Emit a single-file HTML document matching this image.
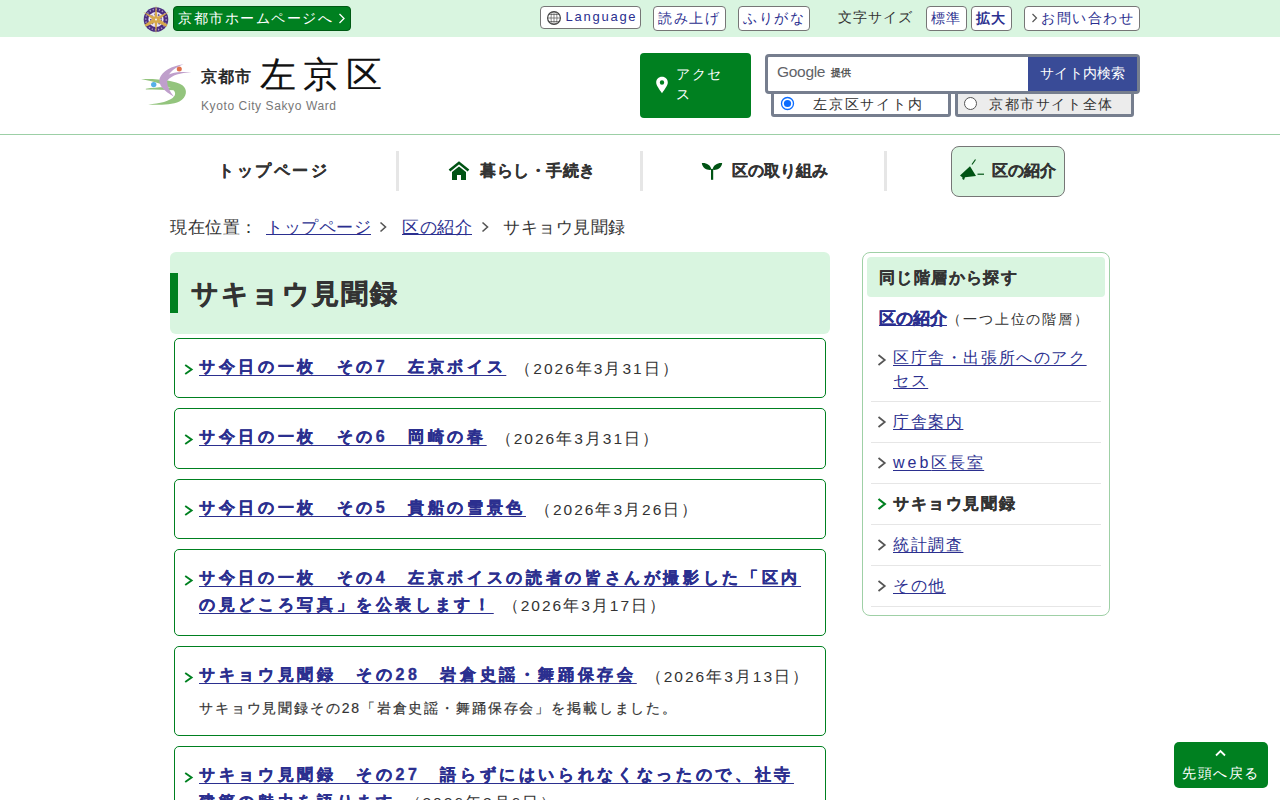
<!DOCTYPE html>
<html lang="ja">
<head>
<meta charset="utf-8">
<style>
*{box-sizing:border-box;margin:0;padding:0}
html,body{width:1280px;height:800px;overflow:hidden;background:#fff}
body{font-family:"Liberation Sans",sans-serif;color:#333;position:relative}
.a{position:absolute;white-space:nowrap}
a{color:#2b2f8f;text-decoration:underline}
.tbtn{position:absolute;background:#fff;border:1px solid #767676;border-radius:4px}
.tt{position:absolute;white-space:nowrap;color:#2b2f8f;font-size:14px;letter-spacing:1px;line-height:16px}
.nav{position:absolute;top:162px;font-size:16px;font-weight:bold;color:#333;line-height:18px;white-space:nowrap;-webkit-text-stroke:0.2px #333}
.ndiv{position:absolute;top:151px;width:3px;height:40px;background:#e6e6e6}
.item{position:absolute;left:174px;width:652px;border:1px solid #008020;border-radius:5px;background:#fff}
.t{position:absolute;left:24px;font-size:16px;font-weight:bold;letter-spacing:3.65px;line-height:26.5px;white-space:normal}
.t a{color:#2b2f8f;text-underline-offset:2.5px;text-decoration-thickness:1.2px;-webkit-text-stroke:0.35px #2b2f8f}
.date{font-weight:normal;color:#333;font-size:15.5px;letter-spacing:2px;margin-left:9px;position:relative;top:1.5px;white-space:nowrap}
.arr{position:absolute;left:9px;width:10px;height:11px;background:no-repeat}
.side{position:absolute;left:871px;width:230px;border-bottom:1px solid #e6e6e6}
.side .st{position:absolute;left:22px;font-size:16px;letter-spacing:1.6px;line-height:24px;white-space:normal;width:205px}
.side a{text-underline-offset:2px}
.sarr{position:absolute;left:5.5px;width:10px;height:12px}
</style>
</head>
<body>
<!-- top bar -->
<div class="a" style="left:0;top:0;width:1280px;height:37px;background:#d9f5e0"></div>
<svg class="a" style="left:142px;top:4px" width="28" height="31" viewBox="0 0 28 31">
<circle cx="14" cy="15.5" r="12.3" fill="#4b2d7f"/>
<circle cx="14" cy="15.5" r="10.3" fill="none" stroke="#a595c4" stroke-width="1.6" stroke-dasharray="1.3 1.9"/>
<circle cx="14" cy="15.5" r="7.6" fill="#ebe6f2"/>
<circle cx="14" cy="15.5" r="5.2" fill="none" stroke="#5d4290" stroke-width="1.6" stroke-dasharray="1.6 2.1"/>
<g fill="#d6a94c" transform="translate(14,15.5)">
<path d="M0,-14.5 L1.7,0 L0,14.5 L-1.7,0 Z"/>
<path d="M-1.9,0 L0,-14.8 L1.9,0 Z" transform="rotate(-60)"/>
<path d="M-1.9,0 L0,-14.8 L1.9,0 Z" transform="rotate(60)"/>
<path d="M-2.2,0 L-1.2,-12.5 L1.2,-12.5 L2.2,0 Z" transform="rotate(-120)"/>
<path d="M-2.2,0 L-1.2,-12.5 L1.2,-12.5 L2.2,0 Z" transform="rotate(120)"/>
</g>
<circle cx="14" cy="15.5" r="0.9" fill="#fff"/>
</svg>
<div class="a" style="left:173px;top:6px;width:178px;height:25px;background:#008020;border:1px solid #005a14;border-radius:4px"></div>
<div class="a" style="left:178px;top:10px;color:#fff;font-size:14px;letter-spacing:1.55px;line-height:16px">京都市ホームページへ</div>
<svg class="a" style="left:338px;top:13px" width="8" height="11" viewBox="0 0 8 11"><path d="M1.5 1 L6 5.5 L1.5 10" fill="none" stroke="#fff" stroke-width="1.3"/></svg>

<div class="tbtn" style="left:540px;top:6px;width:101px;height:23px"></div>
<svg class="a" style="left:546px;top:10px" width="16" height="16" viewBox="0 0 16 16"><g fill="none" stroke="#555" stroke-width="0.7"><circle cx="8" cy="8" r="6.4" stroke-width="1.2" stroke="#444"/><ellipse cx="8" cy="8" rx="3" ry="6.5"/><line x1="1.5" y1="8" x2="14.5" y2="8"/><line x1="2.5" y1="4.5" x2="13.5" y2="4.5"/><line x1="2.5" y1="11.5" x2="13.5" y2="11.5"/><line x1="8" y1="1.5" x2="8" y2="14.5"/></g></svg>
<div class="tt" style="left:565.5px;top:9px;font-size:13px;letter-spacing:1.75px">Language</div>
<div class="tbtn" style="left:653px;top:6px;width:73px;height:25px"></div>
<div class="tt" style="left:658px;top:10px;letter-spacing:1.5px">読み上げ</div>
<div class="tbtn" style="left:738px;top:6px;width:72px;height:25px"></div>
<div class="tt" style="left:743px;top:10px;letter-spacing:1.7px">ふりがな</div>
<div class="tt" style="left:838px;top:9px;color:#333">文字サイズ</div>
<div class="tbtn" style="left:926px;top:6px;width:41px;height:25px"></div>
<div class="tt" style="left:931px;top:10px">標準</div>
<div class="tbtn" style="left:971px;top:6px;width:41px;height:25px"></div>
<div class="tt" style="left:976px;top:10px;font-weight:bold">拡大</div>
<div class="tbtn" style="left:1024px;top:6px;width:116px;height:25px"></div>
<svg class="a" style="left:1031px;top:13px" width="7" height="10" viewBox="0 0 7 10"><path d="M1.5 1 L5.5 5 L1.5 9" fill="none" stroke="#555" stroke-width="1.2"/></svg>
<div class="tt" style="left:1041px;top:10px;letter-spacing:1.6px">お問い合わせ</div>

<!-- logo -->
<svg class="a" style="left:138px;top:60px" width="56" height="48" viewBox="0 0 933 800">
<g fill="#93c47d">
<path d="M50,318 C300,305 620,340 740,420 C830,490 820,620 690,690 C560,750 330,752 170,745 C360,725 540,690 600,610 C650,545 600,480 490,440 C380,395 200,345 50,318 Z"/>
<path d="M130,480 C300,455 480,445 610,470 L615,505 C450,495 300,495 130,490 Z"/>
</g>
<g fill="#bf9fcb">
<path d="M760,72 C560,100 400,190 360,310 C330,420 440,520 600,612 C530,530 490,450 485,360 C480,250 560,150 760,72 Z"/>
<path d="M440,300 C500,220 640,190 890,205 C700,215 570,250 490,340 Z"/>
</g>
<circle cx="688" cy="150" r="42" fill="#e0704a"/>
<circle cx="262" cy="410" r="45" fill="#55b0e8"/>
</svg>
<div class="a" style="left:201px;top:67.5px;font-size:16px;color:#222;letter-spacing:0.8px;line-height:18px;-webkit-text-stroke:0.6px #222">京都市</div>
<div class="a" style="left:260px;top:55px;font-size:36px;color:#111;letter-spacing:7px;line-height:40px;-webkit-text-stroke:0.1px #111">左京区</div>
<div class="a" style="left:201px;top:98px;font-size:12px;color:#777;letter-spacing:0.6px;line-height:16px">Kyoto City Sakyo Ward</div>

<!-- access -->
<div class="a" style="left:640px;top:53px;width:111px;height:65px;background:#008020;border-radius:4px"></div>
<svg class="a" style="left:655px;top:76px" width="14" height="18" viewBox="0 0 14 18"><path d="M7 0.8 C3.5 0.8 1.2 3.3 1.2 6.5 C1.2 9.5 4.5 13.5 7 17.2 C9.5 13.5 12.8 9.5 12.8 6.5 C12.8 3.3 10.5 0.8 7 0.8 Z M7 4.3 A2.2 2.2 0 1 1 7 8.7 A2.2 2.2 0 1 1 7 4.3 Z" fill="#fff" fill-rule="evenodd"/></svg>
<div class="a" style="left:676px;top:64px;color:#fff;font-size:14px;letter-spacing:1.6px;line-height:20px">アクセ<br>ス</div>

<!-- search -->
<div class="a" style="left:765px;top:54px;width:375px;height:40px;border:3px solid #767e8e;border-radius:4px;background:#fff;z-index:1"></div>
<div class="a" style="left:1028px;top:57px;width:109px;height:34px;background:#394b97;z-index:1"></div>
<div class="a" style="z-index:1;left:1040px;top:65px;color:#fff;font-size:14px;letter-spacing:0.3px;line-height:16px">サイト内検索</div>
<div class="a" style="z-index:1;left:777px;top:63px;font-size:15.5px;color:#5f6368;line-height:18px;letter-spacing:-0.3px">Google</div>
<div class="a" style="z-index:1;left:831px;top:67px;font-size:10px;color:#555;font-weight:bold;line-height:12px">提供</div>
<div class="a" style="left:771px;top:91px;width:180px;height:26px;border:3px solid #767e8e;border-radius:3px;background:#fff"></div>
<svg class="a" style="left:780px;top:96px" width="15" height="15" viewBox="0 0 15 15"><circle cx="7.5" cy="7.5" r="6" fill="#fff" stroke="#0b6cff" stroke-width="1.3"/><circle cx="7.5" cy="7.5" r="3.6" fill="#0b6cff"/></svg>
<div class="a" style="left:813px;top:96px;font-size:14px;letter-spacing:1.8px;line-height:16px">左京区サイト内</div>
<div class="a" style="left:955px;top:91px;width:179px;height:26px;border:3px solid #767e8e;border-radius:3px;background:#ececec"></div>
<svg class="a" style="left:963px;top:96px" width="15" height="15" viewBox="0 0 15 15"><circle cx="7.5" cy="7.5" r="6" fill="#fff" stroke="#555" stroke-width="1"/></svg>
<div class="a" style="left:989px;top:96px;font-size:14px;letter-spacing:1.6px;line-height:16px">京都市サイト全体</div>

<div class="a" style="left:0;top:134px;width:1280px;height:1px;background:#9ccfa6"></div>

<!-- nav -->
<div class="nav" style="left:218px;letter-spacing:2.5px">トップページ</div>
<div class="ndiv" style="left:396px"></div>
<svg class="a" style="left:448px;top:161px" width="22" height="20" viewBox="0 0 22 20"><path d="M1.5 9.5 L11 1.8 L20.5 9.5" fill="none" stroke="#005314" stroke-width="2.6"/><path d="M4 11 L11 5.5 L18 11 L18 19 L13 19 L13 14 L9 14 L9 19 L4 19 Z" fill="#005314"/></svg>
<div class="nav" style="left:480px;letter-spacing:0.5px">暮らし・手続き</div>
<div class="ndiv" style="left:640px"></div>
<svg class="a" style="left:701px;top:162px" width="22" height="18" viewBox="0 0 22 18"><path d="M0.8 1 C5 0.5 9.5 2.5 10.6 7.8 C6 8.5 1.5 6.5 0.8 1 Z M21.2 1 C17 0.5 12.5 2.5 11.4 7.8 C16 8.5 20.5 6.5 21.2 1 Z" fill="#005314"/><rect x="10" y="7" width="2.2" height="10.8" fill="#005314"/></svg>
<div class="nav" style="left:732px">区の取り組み</div>
<div class="ndiv" style="left:884px"></div>
<div class="a" style="left:951px;top:146px;width:114px;height:51px;background:#d9f5e0;border:1px solid #767676;border-radius:8px"></div>
<svg class="a" style="left:958px;top:158px" width="28" height="24" viewBox="0 0 28 24"><path d="M2 17.5 L12 8.3 L18 18 L7 19.3 L6 22 L4.3 21 L4.5 19.5 Z" fill="#005314"/><line x1="14" y1="6.5" x2="17.5" y2="1.5" stroke="#005314" stroke-width="1.2"/><line x1="19.5" y1="16.2" x2="26" y2="16.2" stroke="#005314" stroke-width="1.2"/></svg>
<div class="nav" style="left:992px">区の紹介</div>

<!-- breadcrumb -->
<div class="a" style="left:170px;top:218.5px;font-size:17px;line-height:18px;letter-spacing:0.5px">現在位置：</div>
<div class="a" style="left:266px;top:218.5px;font-size:17px;line-height:18px;letter-spacing:0.5px"><a href="#" style="text-underline-offset:1px">トップページ</a></div>
<svg class="a" style="left:379px;top:221px" width="9" height="12" viewBox="0 0 9 12"><path d="M1.5 1.5 L6.5 6 L1.5 10.5" fill="none" stroke="#555" stroke-width="1.6"/></svg>
<div class="a" style="left:402px;top:218.5px;font-size:17px;line-height:18px;letter-spacing:0.5px"><a href="#" style="text-underline-offset:1px">区の紹介</a></div>
<svg class="a" style="left:481px;top:221px" width="9" height="12" viewBox="0 0 9 12"><path d="M1.5 1.5 L6.5 6 L1.5 10.5" fill="none" stroke="#555" stroke-width="1.6"/></svg>
<div class="a" style="left:503px;top:218.5px;font-size:17px;line-height:18px;letter-spacing:0.5px">サキョウ見聞録</div>

<!-- h1 -->
<div class="a" style="left:170px;top:252px;width:660px;height:82px;background:#d9f5e0;border-radius:6px"></div>
<div class="a" style="left:170px;top:273px;width:8px;height:40px;background:#008020"></div>
<div class="a" style="left:191px;top:279px;font-size:27px;font-weight:bold;line-height:30px;letter-spacing:2.2px;color:#333;-webkit-text-stroke:0.5px #333">サキョウ見聞録</div>

<!-- items -->
<div class="item" style="top:338px;height:60px"><svg class="arr" style="top:24.8px" viewBox="0 0 10 11"><path d="M1.2 1 L7.6 5.5 L1.2 10" fill="none" stroke="#008020" stroke-width="1.9"/></svg><div class="t" style="top:15px;width:614px"><a href="#">サ今日の一枚　その7　左京ボイス</a><span class="date">（2026年3月31日）</span></div></div>
<div class="item" style="top:408px;height:61px"><svg class="arr" style="top:24.8px" viewBox="0 0 10 11"><path d="M1.2 1 L7.6 5.5 L1.2 10" fill="none" stroke="#008020" stroke-width="1.9"/></svg><div class="t" style="top:15px;width:614px"><a href="#">サ今日の一枚　その6　岡崎の春</a><span class="date">（2026年3月31日）</span></div></div>
<div class="item" style="top:479px;height:60px"><svg class="arr" style="top:24.8px" viewBox="0 0 10 11"><path d="M1.2 1 L7.6 5.5 L1.2 10" fill="none" stroke="#008020" stroke-width="1.9"/></svg><div class="t" style="top:15px;width:614px"><a href="#">サ今日の一枚　その5　貴船の雪景色</a><span class="date">（2026年3月26日）</span></div></div>
<div class="item" style="top:549px;height:87px"><svg class="arr" style="top:24.8px" viewBox="0 0 10 11"><path d="M1.2 1 L7.6 5.5 L1.2 10" fill="none" stroke="#008020" stroke-width="1.9"/></svg><div class="t" style="top:15px;width:614px"><a href="#">サ今日の一枚　その4　左京ボイスの読者の皆さんが撮影した「区内の見どころ写真」を公表します！</a><span class="date">（2026年3月17日）</span></div></div>
<div class="item" style="top:646px;height:90px"><svg class="arr" style="top:24.8px" viewBox="0 0 10 11"><path d="M1.2 1 L7.6 5.5 L1.2 10" fill="none" stroke="#008020" stroke-width="1.9"/></svg><div class="t" style="top:15px;width:614px"><a href="#">サキョウ見聞録　その28　岩倉史謡・舞踊保存会</a><span class="date">（2026年3月13日）</span></div><div class="a" style="left:24px;top:52px;font-size:14px;letter-spacing:1.85px;line-height:18px;-webkit-text-stroke:0.2px #333">サキョウ見聞録その28「岩倉史謡・舞踊保存会」を掲載しました。</div></div>
<div class="item" style="top:746px;height:90px"><svg class="arr" style="top:24.8px" viewBox="0 0 10 11"><path d="M1.2 1 L7.6 5.5 L1.2 10" fill="none" stroke="#008020" stroke-width="1.9"/></svg><div class="t" style="top:15px;width:614px"><a href="#">サキョウ見聞録　その27　語らずにはいられなくなったので、社寺建築の魅力を語ります</a><span class="date">（2026年3月6日）</span></div></div>

<!-- sidebar -->
<div class="a" style="left:862px;top:252px;width:248px;height:364px;border:1px solid #9fd0a6;border-radius:8px"></div>
<div class="a" style="left:867px;top:257px;width:238px;height:40px;background:#d9f5e0;border-radius:4px"></div>
<div class="a" style="left:879px;top:268.5px;font-size:16px;font-weight:bold;line-height:18px;letter-spacing:1.4px;-webkit-text-stroke:0.2px #333">同じ階層から探す</div>
<div class="a" style="left:879px;top:310px;font-size:17px;line-height:18px"><a href="#" style="font-weight:bold;text-underline-offset:1px;-webkit-text-stroke:0.3px #2b2f8f">区の紹介</a><span style="font-size:14px;letter-spacing:1.9px">（一つ上位の階層）</span></div>
<div class="side" style="top:344px;height:58px"><svg class="sarr" style="top:10px" viewBox="0 0 10 12"><path d="M1.5 1 L7.8 6 L1.5 11" fill="none" stroke="#555" stroke-width="1.7"/></svg><div class="st" style="top:3px;line-height:22.5px"><a href="#">区庁舎・出張所へのアクセス</a></div></div>
<div class="side" style="top:402px;height:41px"><svg class="sarr" style="top:14px" viewBox="0 0 10 12"><path d="M1.5 1 L7.8 6 L1.5 11" fill="none" stroke="#555" stroke-width="1.7"/></svg><div class="st" style="top:8px"><a href="#">庁舎案内</a></div></div>
<div class="side" style="top:443px;height:41px"><svg class="sarr" style="top:14px" viewBox="0 0 10 12"><path d="M1.5 1 L7.8 6 L1.5 11" fill="none" stroke="#555" stroke-width="1.7"/></svg><div class="st" style="top:8px"><a href="#"><span style="letter-spacing:3px">web</span>区長室</a></div></div>
<div class="side" style="top:484px;height:41px"><svg class="sarr" style="top:14px" viewBox="0 0 10 12"><path d="M1.5 1 L7.8 6 L1.5 11" fill="none" stroke="#008020" stroke-width="2.2"/></svg><div class="st" style="top:8px;font-weight:bold;-webkit-text-stroke:0.3px #333">サキョウ見聞録</div></div>
<div class="side" style="top:525px;height:41px"><svg class="sarr" style="top:14px" viewBox="0 0 10 12"><path d="M1.5 1 L7.8 6 L1.5 11" fill="none" stroke="#555" stroke-width="1.7"/></svg><div class="st" style="top:8px"><a href="#">統計調査</a></div></div>
<div class="side" style="top:566px;height:41px"><svg class="sarr" style="top:14px" viewBox="0 0 10 12"><path d="M1.5 1 L7.8 6 L1.5 11" fill="none" stroke="#555" stroke-width="1.7"/></svg><div class="st" style="top:8px"><a href="#">その他</a></div></div>

<!-- back to top -->
<div class="a" style="left:1174px;top:742px;width:94px;height:46px;background:#008020;border-radius:5px"></div>
<svg class="a" style="left:1215px;top:749px" width="11" height="8" viewBox="0 0 11 8"><path d="M1 6.5 L5.5 2 L10 6.5" fill="none" stroke="#fff" stroke-width="1.8"/></svg>
<div class="a" style="left:1182px;top:764.5px;color:#fff;font-size:14px;letter-spacing:1.6px;line-height:16px">先頭へ戻る</div>
</body>
</html>
